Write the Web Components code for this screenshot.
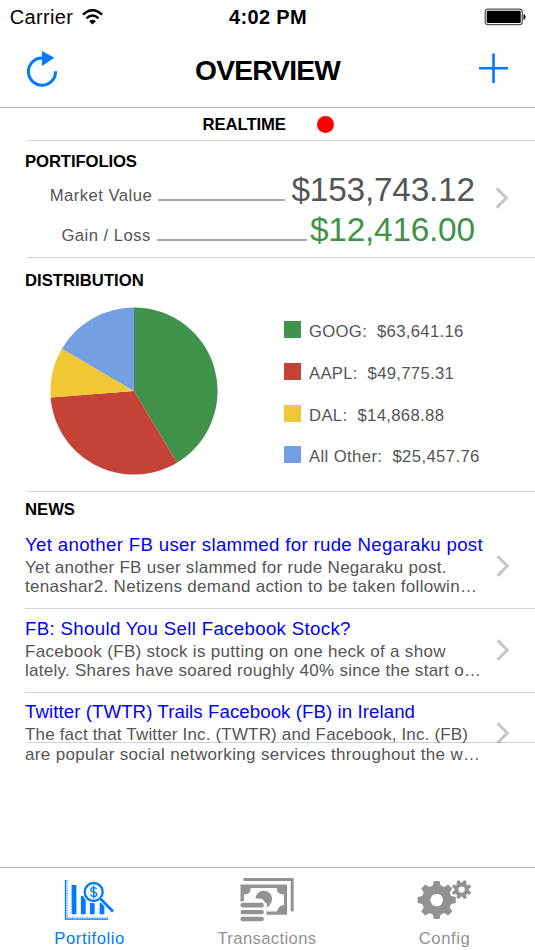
<!DOCTYPE html>
<html lang="en">
<head>
<meta charset="utf-8">
<title>Overview</title>
<style>
  html, body {
    margin: 0;
    height: 100%;
    overflow: hidden;
    background: #fff;
  }
  body {
    font-family: "Liberation Sans", Arial, sans-serif;
    font-size: 16.7px;
    color: #000;
  }
</style>
</head>
<body>
<portfolio-app></portfolio-app>

<script>
const define = (name, html, setup) => {
  const template = document.createElement('template')
  template.innerHTML = html

  customElements.define(name, class extends HTMLElement {
    connectedCallback() {
      if (this.shadowRoot) return
      const root = this.attachShadow({ mode: 'open' })
      root.appendChild(template.content.cloneNode(true))
      if (setup) setup(this, root)
    }
  })
}

// one line of text, tracked so that it fills the given width
define('fit-text', `
  <style>
    :host { display: block; flex: none; white-space: nowrap; }
    span { display: inline-block; }
  </style>
  <span><slot></slot></span>
`, (host, root) => {
  const span = root.querySelector('span')
  const width = Number(host.getAttribute('width'))
  host.style.width = width + 'px'
  const natural = span.getBoundingClientRect().width
  const gaps = host.textContent.length - 1
  span.style.letterSpacing = ((width - natural) / gaps).toFixed(3) + 'px'
})

define('chevron-icon', `
  <style>
    :host { display: block; width: 14px; height: 22px; flex: none; }
    svg { display: block; }
  </style>
  <svg width="14" height="22" viewBox="0 0 14 22">
    <path d="M1.6 1.3 L11.3 11 L1.6 20.7" fill="none" stroke="#c7c7cc" stroke-width="3.1"/>
  </svg>
`)

define('status-bar', `
  <style>
    :host {
      display: grid;
      grid-template-columns: 1fr auto 1fr;
      align-items: center;
      height: 34px;
      padding: 0 9px 0 9.7px;
      font-size: 20px;
      line-height: 34px;
    }
    .left { display: flex; align-items: center; gap: 9px; }
    .time { font-weight: bold; }
    .battery { justify-self: end; }
    svg { display: block; }
  </style>
  <div class="left">
    <fit-text width="63.3">Carrier</fit-text>
    <svg width="21" height="16" viewBox="0 0 21 16">
      <g fill="none" stroke="#000" stroke-width="2.5">
        <path d="M1 5.6 Q10.5 -3 20 5.6"/>
        <path d="M4.5 9.3 Q10.5 3.7 16.5 9.3"/>
      </g>
      <path d="M7.1 12.2 Q10.5 9.3 13.9 12.2 L10.5 15.6 Z"/>
    </svg>
  </div>
  <fit-text class="time" width="77.6">4:02 PM</fit-text>
  <svg class="battery" width="42" height="18" viewBox="0 0 42 18">
    <rect x="1.2" y="1.2" width="37" height="15.4" rx="2.6" fill="#fff" stroke="#555" stroke-width="1.2"/>
    <rect x="2.7" y="2.7" width="34" height="12.4" rx="1"/>
    <path d="M39.5 6 Q41.6 6.6 41.6 9 Q41.6 11.4 39.5 12 Z"/>
  </svg>
`)

define('nav-bar', `
  <style>
    :host {
      display: flex;
      align-items: center;
      justify-content: space-between;
      box-sizing: border-box;
      height: 74px;
      padding: 0 26px;
      border-bottom: 1px solid #b4b4b4;
      font-size: 28.2px;
      font-weight: bold;
      line-height: 73px;
    }
    svg { display: block; margin-bottom: 2px; }
  </style>
  <svg width="32" height="38" viewBox="0 0 32 38">
    <path d="M16 7 A13.6 13.6 0 1 0 29.6 20.2" fill="none" stroke="#007aff" stroke-width="3"/>
    <path d="M16 0 L28.3 6.8 L16 15 Z" fill="#007aff"/>
  </svg>
  <slot></slot>
  <svg width="31" height="36" viewBox="0 0 31 36">
    <path d="M1 16.3 H30 M15.5 1.6 V31" fill="none" stroke="#007aff" stroke-width="2.6"/>
  </svg>
`)

define('page-section', `
  <style>
    :host {
      display: block;
      position: relative;
      box-sizing: border-box;
      padding: 0 0 0 25px;
    }
    .rule {
      position: absolute;
      left: 27px;
      right: 0;
      bottom: 0;
      height: 1px;
      background: rgba(0, 0, 10, .18);
    }
  </style>
  <slot></slot>
  <div class="rule"></div>
`)

define('section-title', `
  <style>
    :host { display: block; font-weight: bold; line-height: 20px; }
  </style>
  <slot></slot>
`)

define('amount-row', `
  <style>
    :host {
      display: flex;
      align-items: baseline;
      line-height: 40px;
      height: 40px;
      color: #555;
    }
    .leader { flex: 1; height: 1.6px; background: #a8a8a8; margin: 0 var(--leader-gap, 6.5px) 0 6.8px; }
    .amount { font-size: 33.4px; color: var(--amount-color, #555); }
  </style>
  <slot name="label"></slot>
  <div class="leader"></div>
  <div class="amount"><slot></slot></div>
`)

define('pie-chart', `
  <style>
    :host { display: block; width: 168px; height: 168px; }
    svg { display: block; }
  </style>
  <svg width="168" height="168" viewBox="-84 -84 168 168"></svg>
`, (host, root) => {
  const slices = [
    [63641.16, '#41924b'],
    [49775.31, '#c44336'],
    [14868.88, '#f0c735'],
    [25457.76, '#73a0e3']
  ]
  const total = slices.reduce((sum, [value]) => sum + value, 0)
  const radius = 83.6
  const point = share => {
    const angle = share * 2 * Math.PI
    return (radius * Math.sin(angle)).toFixed(2) + ' ' + (-radius * Math.cos(angle)).toFixed(2)
  }
  let start = 0
  for (const [value, color] of slices) {
    const end = start + value / total
    const path = document.createElementNS('http://www.w3.org/2000/svg', 'path')
    path.setAttribute('d', `M0 0 L${point(start)} A${radius} ${radius} 0 0 1 ${point(end)} Z`)
    path.setAttribute('fill', color)
    root.querySelector('svg').appendChild(path)
    start = end
  }
})

define('legend-item', `
  <style>
    :host { display: flex; align-items: flex-start; gap: 8px; color: #555; line-height: 22px; }
    i { width: 17px; height: 17px; background: var(--swatch); }
  </style>
  <i></i>
  <slot></slot>
`)

define('news-item', `
  <style>
    :host {
      display: flex;
      align-items: center;
      justify-content: space-between;
      box-sizing: border-box;
      height: 83.6px;
      padding-right: 25px;
      border-bottom: 1px solid #d6d6d8;
      color: #555;
      font-size: 17px;
      line-height: 19.5px;
    }
    :host(:last-of-type) { border-bottom-color: transparent; }
    .title { color: #00f; font-size: 18.7px; line-height: 22px; margin-bottom: 1.8px; }
    .text { width: 460px; padding-bottom: 2.2px; }
    chevron-icon { margin-bottom: 1px; }
  </style>
  <div class="text">
    <div class="title"><slot name="title"></slot></div>
    <slot></slot>
  </div>
  <chevron-icon></chevron-icon>
`)

define('tab-item', `
  <style>
    :host {
      display: flex;
      flex: 1;
      flex-direction: column;
      align-items: center;
      color: #929292;
      line-height: 20px;
    }
    :host([active]) { color: #007aff; }
    .icon { height: 51px; margin-top: 10px; }
  </style>
  <div class="icon"><slot name="icon"></slot></div>
  <slot></slot>
`)

define('tab-bar', `
  <style>
    :host {
      display: flex;
      box-sizing: border-box;
      height: 83px;
      padding: 0 2px 0 .6px;
      border-top: 1px solid #b4b4b4;
      background: #fff;
    }
    svg { display: block; }
  </style>
  <tab-item active>
    <svg slot="icon" width="54" height="44" viewBox="0 0 54 44">
      <g fill="none" stroke="currentColor">
        <path d="M3.5 2 V41.2 H46" stroke-width="1.3"/>
        <path d="M5.1 2 V39.6 H46" stroke-width="1.8" stroke-dasharray="1.2 1.3" opacity=".55"/>
        <path d="M12 7 V36.2 M21.3 18 V36.2 M30.3 24 V36.2 M40 25 V36.2" stroke-width="4.8"/>
        <circle cx="31.7" cy="14" r="11.2" fill="#fff" stroke="none"/>
        <circle cx="31.7" cy="14" r="9" stroke-width="2.3"/>
        <path d="M38.3 20.5 L50.5 33" stroke="#fff" stroke-width="5"/>
        <path d="M38 20.3 L51 33.5" stroke-width="2.7"/>
        <path d="M34.6 11 Q33.8 9.6 31.7 9.6 Q28.9 9.6 28.9 11.7 Q28.9 13.3 31.7 13.9 Q34.7 14.6 34.7 16.4 Q34.7 18.5 31.7 18.5 Q29.4 18.5 28.6 16.8 M31.7 7.6 V20.4" stroke-width="1.4"/>
      </g>
    </svg>
    <fit-text width="70">Portifolio</fit-text>
  </tab-item>
  <tab-item>
    <svg slot="icon" width="54" height="44" viewBox="0 0 54 44">
      <path d="M3.5 0 H53.7 V33.4 H50.7 V3 H3.5 Z" fill="currentColor"/>
      <path d="M.5 6.6 H47 V36.8 H26.5 V25 H.5 Z" fill="currentColor"/>
      <path d="M10.5 10 H37 V12.5 Q38 16.2 44 16.5 V27 Q38 27.5 37 33.5 H26.5 V25 H4 V16.5 Q10 16.2 10.5 12.5 Z" fill="#fff"/>
      <circle cx="23.7" cy="21.2" r="8.4" fill="currentColor"/>
      <path d="M14 20.6 H20.5 Q23.5 21 24.5 24 L27 26 L26 32 H12 V24 Z" fill="#fff"/>
      <path d="M.5 23.3 H24 L26 26 V44 H.5 Z" fill="#fff"/>
      <g fill="currentColor">
        <rect x=".5" y="24.8" width="23.3" height="4.8" rx="2"/>
        <rect x=".5" y="31.9" width="23.3" height="4.4" rx="2"/>
        <rect x=".5" y="38.7" width="23.3" height="4.6" rx="2"/>
      </g>
    </svg>
    <fit-text width="98.7">Transactions</fit-text>
  </tab-item>
  <tab-item>
    <svg slot="icon" class="gears" width="54" height="44" viewBox="0 0 54 44"></svg>
    <fit-text width="51">Config</fit-text>
  </tab-item>
`, (host, root) => {
  // outline of a cog with eight teeth and a round hole
  const gear = (cx, cy, outer, inner, hole, turn) => {
    const points = []
    for (let i = 0; i < 8; i++) {
      for (const [offset, r] of [[-.27, inner], [-.15, outer], [.15, outer], [.27, inner]]) {
        const angle = i * Math.PI / 4 + offset + turn
        points.push((cx + r * Math.cos(angle)).toFixed(2) + ' ' + (cy + r * Math.sin(angle)).toFixed(2))
      }
    }
    return `<path fill="currentColor" fill-rule="evenodd" d="M${points.join('L')}Z
      M${cx - hole} ${cy}a${hole} ${hole} 0 1 0 ${hole * 2} 0a${hole} ${hole} 0 1 0 ${-hole * 2} 0Z"/>`
  }
  root.querySelector('.gears').innerHTML =
    gear(19.7, 22, 19.3, 15, 6.3, 0) + gear(44.6, 11.6, 9.8, 7.2, 3.2, Math.PI / 8)
})

define('portfolio-app', `
  <style>
    :host { display: flex; flex-direction: column; height: 950px; width: 535px; }
    main { flex: 1; }
    .realtime {
      height: 33px;
      display: flex;
      align-items: center;
      padding-left: 202.6px;
      font-weight: bold;
      gap: 31.5px;
    }
    .realtime i { width: 17px; height: 17px; margin-bottom: 1px; border-radius: 50%; background: #f00; }
    .portfolios { height: 117px; padding-top: 10.5px; }
    .summary { display: flex; align-items: center; margin-top: -2px; }
    .rows { width: 450px; }
    .rows amount-row:first-child { padding-left: 24.7px; }
    .rows amount-row:last-child { padding-left: 36.4px; --amount-color: #3c9448; --leader-gap: 3.3px; }
    .summary chevron-icon { margin: -23px 0 0 19.5px; }
    .distribution { height: 234px; padding-top: 12.5px; }
    .chart { display: flex; padding: 16px 0 0 24.6px; gap: 66.4px; }
    .legend { display: grid; grid-auto-rows: 41.8px; padding-top: 14.5px; }
    .news { height: 251px; padding-top: 7.5px; }
    .news section-title { margin-bottom: 5.9px; }
  </style>
  <status-bar></status-bar>
  <nav-bar><fit-text width="145.8">OVERVIEW</fit-text></nav-bar>
  <main>
    <page-section class="realtime">
      <fit-text width="83.4">REALTIME</fit-text>
      <i></i>
    </page-section>
    <page-section class="portfolios">
      <section-title><fit-text width="112">PORTIFOLIOS</fit-text></section-title>
      <div class="summary">
        <div class="rows">
          <amount-row>
            <fit-text slot="label" width="102">Market Value</fit-text>
            <fit-text width="183.5">$153,743.12</fit-text>
          </amount-row>
          <amount-row>
            <fit-text slot="label" width="89">Gain / Loss</fit-text>
            <fit-text width="165">$12,416.00</fit-text>
          </amount-row>
        </div>
        <chevron-icon></chevron-icon>
      </div>
    </page-section>
    <page-section class="distribution">
      <section-title><fit-text width="118.8">DISTRIBUTION</fit-text></section-title>
      <div class="chart">
        <pie-chart></pie-chart>
        <div class="legend">
          <legend-item style="--swatch: #41924b"><fit-text width="154.4">GOOG:&nbsp; $63,641.16</fit-text></legend-item>
          <legend-item style="--swatch: #c44336"><fit-text width="144.8">AAPL:&nbsp; $49,775.31</fit-text></legend-item>
          <legend-item style="--swatch: #f0c735"><fit-text width="135">DAL:&nbsp; $14,868.88</fit-text></legend-item>
          <legend-item style="--swatch: #73a0e3"><fit-text width="170.4">All Other:&nbsp; $25,457.76</fit-text></legend-item>
        </div>
      </div>
    </page-section>
    <page-section class="news">
      <section-title><fit-text width="50">NEWS</fit-text></section-title>
      <news-item>
        <fit-text slot="title" width="457.7">Yet another FB user slammed for rude Negaraku post</fit-text>
        <fit-text width="421.5">Yet another FB user slammed for rude Negaraku post.</fit-text>
        <fit-text width="452">tenashar2. Netizens demand action to be taken followin…</fit-text>
      </news-item>
      <news-item>
        <fit-text slot="title" width="325.5">FB: Should You Sell Facebook Stock?</fit-text>
        <fit-text width="420.5">Facebook (FB) stock is putting on one heck of a show</fit-text>
        <fit-text width="456">lately. Shares have soared roughly 40% since the start o…</fit-text>
      </news-item>
      <news-item>
        <fit-text slot="title" width="390">Twitter (TWTR) Trails Facebook (FB) in Ireland</fit-text>
        <fit-text width="443">The fact that Twitter Inc. (TWTR) and Facebook, Inc. (FB)</fit-text>
        <fit-text width="455">are popular social networking services throughout the w…</fit-text>
      </news-item>
    </page-section>
  </main>
  <tab-bar></tab-bar>
`)
</script>
</body>
</html>
